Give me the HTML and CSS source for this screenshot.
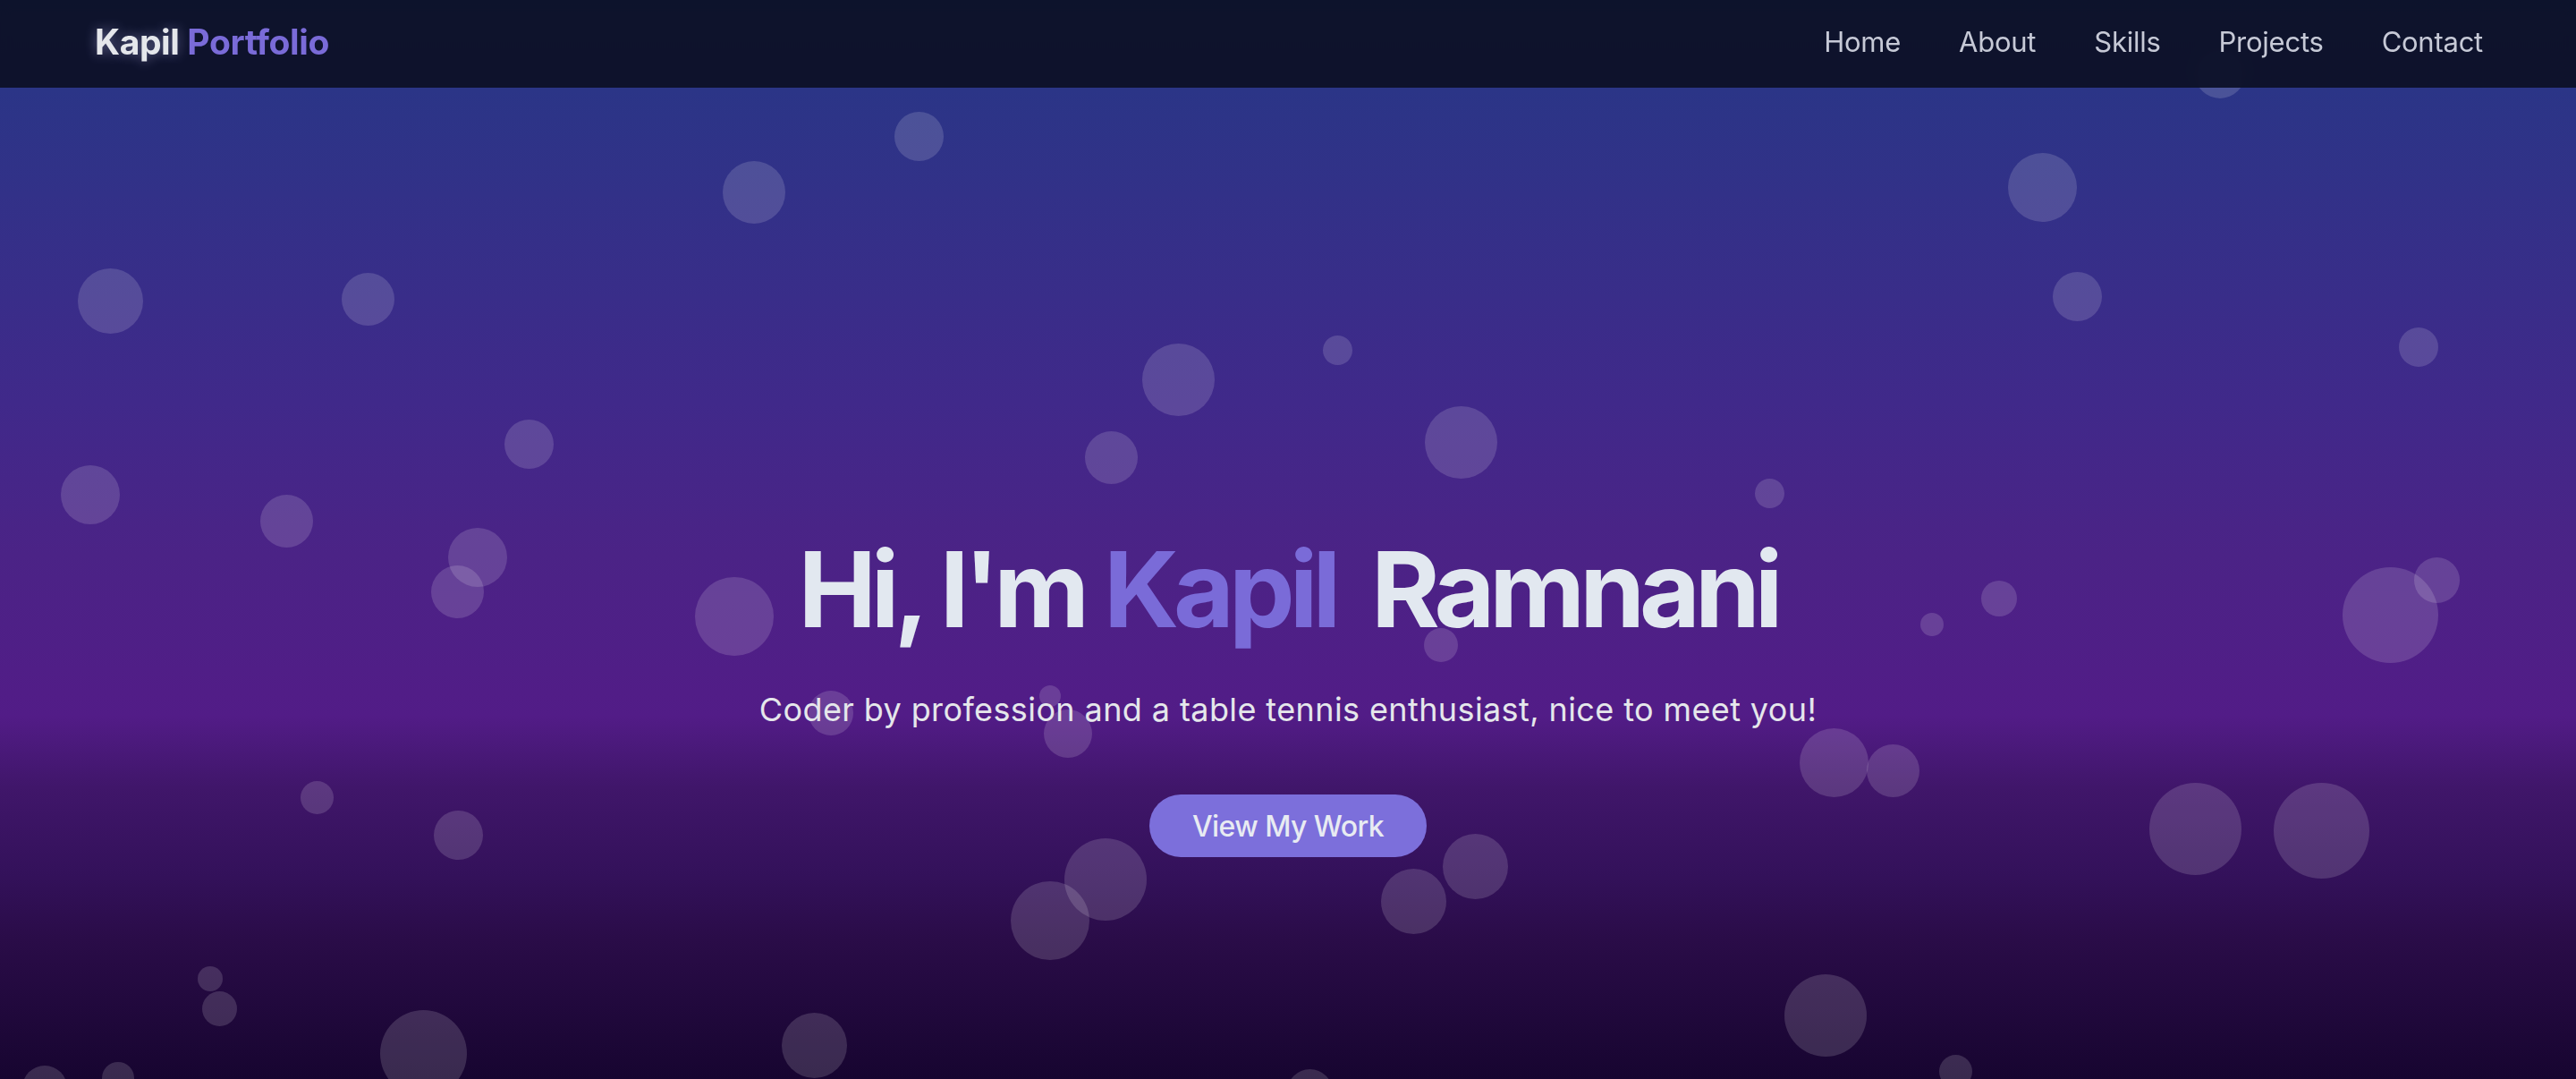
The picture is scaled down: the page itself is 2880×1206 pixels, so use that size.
FILE: index.html
```html
<!DOCTYPE html>
<html lang="en">
<head>
<meta charset="utf-8">
<title>Kapil Portfolio</title>
<link rel="stylesheet" href="styles.css">
</head>
<body>
<header class="nav">
  <a class="logo" href="#"><span class="logo-name">Kapil</span> <span class="logo-accent">Portfolio</span></a>
  <nav class="links">
    <a href="#">Home</a>
    <a href="#">About</a>
    <a href="#">Skills</a>
    <a href="#">Projects</a>
    <a href="#">Contact</a>
  </nav>
</header>
<main class="hero">
  <div class="bubbles">
    <span class="bubble" style="--x:1027px;--y:152px;--d:55px"></span>
    <span class="bubble" style="--x:843px;--y:215px;--d:70px"></span>
    <span class="bubble" style="--x:2283px;--y:209px;--d:77px"></span>
    <span class="bubble" style="--x:123px;--y:336px;--d:73px"></span>
    <span class="bubble" style="--x:411px;--y:334px;--d:59px"></span>
    <span class="bubble" style="--x:2322px;--y:331px;--d:55px"></span>
    <span class="bubble" style="--x:2482px;--y:82px;--d:56px"></span>
    <span class="bubble" style="--x:1495px;--y:391px;--d:33px"></span>
    <span class="bubble" style="--x:1317px;--y:424px;--d:81px"></span>
    <span class="bubble" style="--x:2704px;--y:388px;--d:44px"></span>
    <span class="bubble" style="--x:1242px;--y:511px;--d:59px"></span>
    <span class="bubble" style="--x:1633px;--y:494px;--d:81px"></span>
    <span class="bubble" style="--x:591px;--y:496px;--d:55px"></span>
    <span class="bubble" style="--x:101px;--y:553px;--d:66px"></span>
    <span class="bubble" style="--x:320px;--y:582px;--d:59px"></span>
    <span class="bubble" style="--x:1978px;--y:551px;--d:33px"></span>
    <span class="bubble" style="--x:534px;--y:623px;--d:66px"></span>
    <span class="bubble" style="--x:511px;--y:661px;--d:59px"></span>
    <span class="bubble" style="--x:821px;--y:689px;--d:88px"></span>
    <span class="bubble" style="--x:2235px;--y:669px;--d:40px"></span>
    <span class="bubble" style="--x:2160px;--y:698px;--d:26px"></span>
    <span class="bubble" style="--x:2672px;--y:687px;--d:107px"></span>
    <span class="bubble" style="--x:2724px;--y:648px;--d:51px"></span>
    <span class="bubble" style="--x:1611px;--y:721px;--d:38px"></span>
    <span class="bubble" style="--x:929px;--y:797px;--d:50px"></span>
    <span class="bubble" style="--x:1174px;--y:778px;--d:24px"></span>
    <span class="bubble" style="--x:1194px;--y:820px;--d:54px"></span>
    <span class="bubble" style="--x:2050px;--y:852px;--d:77px"></span>
    <span class="bubble" style="--x:2116px;--y:861px;--d:59px"></span>
    <span class="bubble" style="--x:354px;--y:891px;--d:37px"></span>
    <span class="bubble" style="--x:512px;--y:933px;--d:55px"></span>
    <span class="bubble" style="--x:2454px;--y:926px;--d:103px"></span>
    <span class="bubble" style="--x:2595px;--y:928px;--d:107px"></span>
    <span class="bubble" style="--x:1649px;--y:968px;--d:73px"></span>
    <span class="bubble" style="--x:1236px;--y:983px;--d:92px"></span>
    <span class="bubble" style="--x:1580px;--y:1007px;--d:73px"></span>
    <span class="bubble" style="--x:1174px;--y:1029px;--d:88px"></span>
    <span class="bubble" style="--x:235px;--y:1094px;--d:28px"></span>
    <span class="bubble" style="--x:245px;--y:1127px;--d:39px"></span>
    <span class="bubble" style="--x:473px;--y:1177px;--d:97px"></span>
    <span class="bubble" style="--x:910px;--y:1168px;--d:73px"></span>
    <span class="bubble" style="--x:2041px;--y:1135px;--d:92px"></span>
    <span class="bubble" style="--x:50px;--y:1216px;--d:50px"></span>
    <span class="bubble" style="--x:132px;--y:1205px;--d:36px"></span>
    <span class="bubble" style="--x:2186px;--y:1197px;--d:37px"></span>
    <span class="bubble" style="--x:1464px;--y:1220px;--d:51px"></span>
  </div>
  <div class="hero-content">
    <h1 class="title">Hi, I'm <span class="title-accent">Kapil</span> Ramnani</h1>
    <p class="subtitle">Coder by profession and a table tennis enthusiast, nice to meet you!</p>
    <a class="btn" href="#">View My Work</a>
  </div>
</main>
</body>
</html>
```

FILE: styles.css
```css
* {
  box-sizing: border-box;
}

html, body {
  margin: 0;
  padding: 0;
}

body {
  font-family: "Inter", "Noto Sans", "Liberation Sans", sans-serif;
  background: #170530;
  color: #e2e8f0;
  overflow: hidden;
}

a {
  text-decoration: none;
  color: inherit;
}

.nav {
  position: fixed;
  top: 0;
  left: 0;
  right: 0;
  z-index: 10;
  height: 98px;
  padding: 0 104px 6px 106px;
  display: flex;
  align-items: center;
  justify-content: space-between;
  background: rgba(13, 17, 39, 0.95);
  backdrop-filter: blur(6px);
}

.logo {
  font-size: 39px;
  font-weight: 700;
  letter-spacing: -0.01em;
}

.logo-name {
  color: #e5e7eb;
  text-shadow: 0 0 14px rgba(200, 195, 255, 0.45);
}

.logo-accent {
  color: #7a6bd8;
}

.links {
  display: flex;
  gap: 65px;
}

.links a {
  font-size: 31px;
  font-weight: 400;
  color: #c6c9d6;
  letter-spacing: -0.008em;
}

.hero {
  position: relative;
  height: 1206px;
  overflow: hidden;
  background: linear-gradient(
    to bottom,
    #24388a 0px,
    #2b3587 100px,
    #40298a 450px,
    #4b2386 620px,
    #521c87 800px,
    #40166a 880px,
    #33115a 980px,
    #2a0c48 1050px,
    #170530 1206px
  );
}

.bubbles {
  position: absolute;
  inset: 0;
}

.bubble {
  position: absolute;
  left: calc(var(--x) - var(--d) / 2);
  top: calc(var(--y) - var(--d) / 2);
  width: var(--d);
  height: var(--d);
  border-radius: 50%;
  background: rgba(255, 255, 255, 0.15);
}

.hero-content {
  position: relative;
  display: flex;
  flex-direction: column;
  align-items: center;
  padding-top: 600px;
  text-align: center;
}

.title {
  margin: 0;
  font-size: 117px;
  line-height: 1;
  font-weight: 700;
  letter-spacing: -0.051em;
  color: #e2e8f0;
}

.title-accent {
  color: #7a6bd8;
  margin-right: 18px;
}

.subtitle {
  margin: 48px 0 0;
  font-size: 36px;
  line-height: 56px;
  color: #e5e7eb;
  letter-spacing: 0.011em;
}

.btn {
  margin-top: 67px;
  height: 70px;
  padding: 0 48px;
  display: inline-flex;
  align-items: center;
  border-radius: 999px;
  background: #7c6fdb;
  color: #e8ebf2;
  font-size: 32px;
  font-weight: 500;
  letter-spacing: -0.018em;
}
```
